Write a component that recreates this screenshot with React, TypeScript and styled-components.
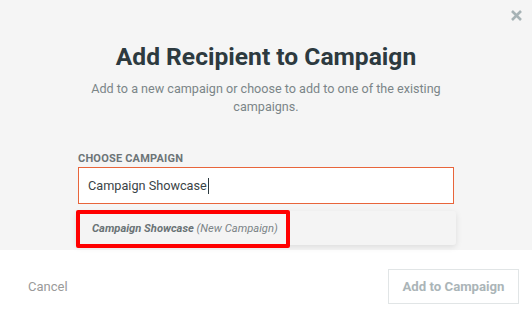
import React from 'react';
import styled, { createGlobalStyle } from 'styled-components';

const GlobalStyle = createGlobalStyle`
    html, body {
        margin: 0;
        padding: 0;
        background: #ffffff;
        font-family: Roboto, 'Liberation Sans', sans-serif;
    }
    * {
        box-sizing: border-box;
    }
`;

const Modal = styled.div`
    width: 532px;
    height: 315px;
    display: flex;
    flex-direction: column;
    background: #ffffff;
`;

const Body = styled.div`
    position: relative;
    height: 250px;
    flex-shrink: 0;
    background: #f5f5f5;
    padding: 42px 76px 0 76px;
    display: flex;
    flex-direction: column;
    align-items: stretch;
`;

const CloseButton = styled.button`
    position: absolute;
    top: 8px;
    right: 9px;
    width: 14px;
    height: 14px;
    padding: 0;
    border: none;
    background: transparent;
    display: flex;
    align-items: center;
    justify-content: center;
    cursor: pointer;
`;

const Title = styled.h1`
    margin: 0;
    text-align: center;
    font-size: 24.6px;
    line-height: 30px;
    font-weight: 700;
    color: #2d3a3f;
`;

const Subtitle = styled.p`
    margin: 8px 0 0 0;
    text-align: center;
    font-size: 12.6px;
    line-height: 18px;
    color: #7b8588;
`;

const Field = styled.div`
    margin-top: 36px;
    display: flex;
    flex-direction: column;
    padding: 0 2px;
`;

const Label = styled.label`
    font-size: 11px;
    font-weight: 700;
    letter-spacing: 0.2px;
    color: #6c7477;
    line-height: 14px;
    margin-bottom: 1px;
`;

const InputBox = styled.div`
    height: 37px;
    border: 1px solid #e8653b;
    background: #ffffff;
    display: flex;
    align-items: center;
    padding: 0 9px;
    font-size: 12.7px;
    color: #3a4447;
`;

const Caret = styled.span`
    display: inline-block;
    width: 1px;
    height: 16px;
    background: #2d3a3f;
    margin-left: 1px;
`;

const Dropdown = styled.div`
    position: relative;
    margin-top: 7px;
    height: 34px;
    background: #f4f4f4;
    border-radius: 3px;
    box-shadow: 0 2px 6px rgba(0, 0, 0, 0.1);
    display: flex;
    align-items: center;
    padding: 0 16px;
`;

const Option = styled.span`
    font-size: 11.2px;
    font-style: italic;
    color: #7a8386;
`;

const OptionName = styled.strong`
    font-weight: 700;
    color: #6a7376;
`;

const Highlight = styled.div`
    position: absolute;
    left: 0;
    top: -1px;
    width: 214px;
    height: 38px;
    border: 4px solid #ff0000;
    border-radius: 2px;
`;

const Footer = styled.div`
    flex: 1;
    display: flex;
    align-items: center;
    justify-content: space-between;
    padding: 7px 13px 0 28px;
`;

const CancelLink = styled.button`
    border: none;
    background: transparent;
    padding: 0;
    font-family: inherit;
    font-size: 13px;
    color: #9a9a9a;
    cursor: pointer;
`;

const SubmitButton = styled.button`
    width: 131px;
    height: 35px;
    border: 1px solid #e1e5e6;
    background: #ffffff;
    font-family: inherit;
    font-size: 13.2px;
    font-weight: 700;
    color: #abb5b8;
    cursor: not-allowed;
`;

const App = () => {
    return (
        <Modal>
            <GlobalStyle />
            <Body>
                <CloseButton aria-label="Close">
                    <svg width="11" height="11" viewBox="0 0 11 11">
                        <path d="M1 1 L10 10 M10 1 L1 10" stroke="#a7b3b6" strokeWidth="2.6" strokeLinecap="butt" />
                    </svg>
                </CloseButton>
                <Title>Add Recipient to Campaign</Title>
                <Subtitle>
                    Add to a new campaign or choose to add to one of the existing
                    <br />
                    campaigns.
                </Subtitle>
                <Field>
                    <Label>CHOOSE CAMPAIGN</Label>
                    <InputBox>
                        Campaign Showcase
                        <Caret />
                    </InputBox>
                </Field>
                <Dropdown>
                    <Highlight />
                    <Option>
                        <OptionName>Campaign Showcase</OptionName> (New Campaign)
                    </Option>
                </Dropdown>
            </Body>
            <Footer>
                <CancelLink>Cancel</CancelLink>
                <SubmitButton>Add to Campaign</SubmitButton>
            </Footer>
        </Modal>
    );
};

export default App;
